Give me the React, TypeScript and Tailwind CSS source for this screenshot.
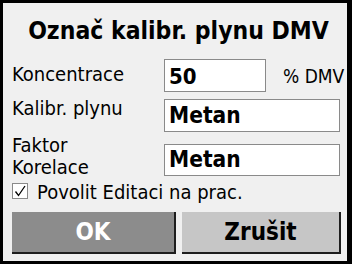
import React, { useState } from 'react';

const font = "font-['DejaVu_Sans_Condensed','DejaVu_Sans',sans-serif]";

const App: React.FC = () => {
  const [allowEdit, setAllowEdit] = useState(true);

  return (
    <div className={`w-[352px] h-[264px] bg-[#f0f0f0] border-[3px] border-r-[5px] border-black flex flex-col pl-[9px] text-black ${font}`}>
      {/* Title */}
      <div className="h-[56px] flex items-center justify-center pr-[2px]">
        <h1 className="text-[24.5px] font-bold leading-none">Označ kalibr. plynu DMV</h1>
      </div>

      {/* Koncentrace */}
      <div className="flex h-[33px]">
        <div className="w-[152px] mt-[3px] text-[20px] leading-[24px]">Koncentrace</div>
        <div className="w-[102px] h-[33px] bg-white border border-[#8a8a8a] flex items-center pl-[4px] pt-[2px] text-[22px] font-bold">50</div>
        <div className="ml-[17px] mt-[5px] text-[19px] leading-[24px]">% DMV</div>
      </div>

      {/* Kalibr. plynu */}
      <div className="flex mt-[4px]">
        <div className="w-[152px] text-[20px] leading-[24px]">Kalibr. plynu</div>
        <div className="mt-[3px] w-[176px] h-[33px] bg-white border border-[#8a8a8a] flex items-center pl-[4px] text-[22.5px] font-bold">Metan</div>
      </div>

      {/* Faktor Korelace */}
      <div className="flex mt-[2px]">
        <div className="w-[152px] text-[20px] leading-[22px]">
          Faktor
          <br />
          Korelace
        </div>
        <div className="mt-[10px] w-[176px] h-[32px] bg-white border border-[#8a8a8a] flex items-center pl-[4px] text-[22.5px] font-bold">Metan</div>
      </div>

      {/* Checkbox */}
      <label className="flex items-center mt-[5px] h-[16px] gap-[9px] cursor-pointer">
        <span
          onClick={() => setAllowEdit(!allowEdit)}
          className="w-[16px] h-[16px] bg-white border border-[#8a8a8a] flex items-center justify-center"
        >
          {allowEdit && (
            <svg width="14" height="14" viewBox="0 0 14 14" fill="none" stroke="black" strokeWidth="1.3">
              <polyline points="2.5,7.5 5.5,11.5 12,2" />
            </svg>
          )}
        </span>
        <span className="text-[20px] leading-[24px] mt-[2px]">Povolit Editaci na prac.</span>
      </label>

      {/* Buttons */}
      <div className="flex gap-[6px] mt-[13px]">
        <button className="w-[164px] h-[42px] bg-[#8c8c8c] border-r-2 border-b-2 border-[#1e1e1e] text-white text-[24px] font-bold leading-none">
          OK
        </button>
        <button className="w-[159px] h-[42px] bg-[#c6c6c6] border-r-2 border-b-2 border-[#1e1e1e] text-black text-[24px] font-bold leading-none">
          Zrušit
        </button>
      </div>
    </div>
  );
};

export default App;
